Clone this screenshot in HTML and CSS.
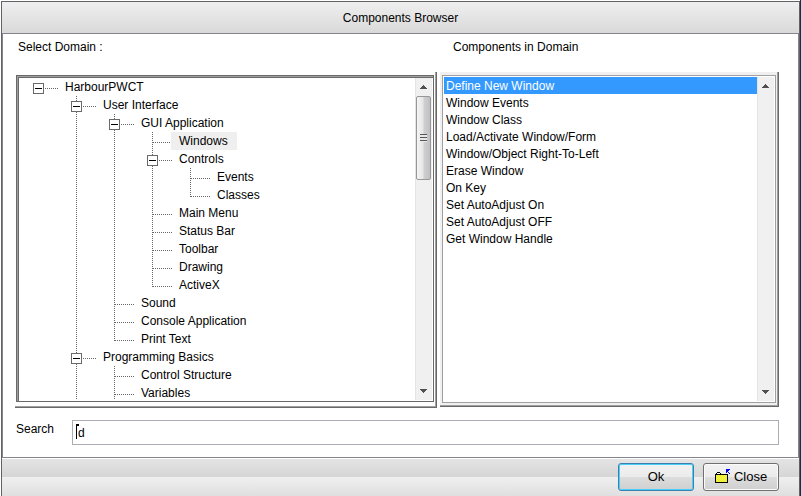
FILE: index.html
```
<!DOCTYPE html>
<html lang="en">
<head>
    <meta charset="UTF-8">
    <title>Components Browser</title>
    <link rel="stylesheet" href="styles.css">
</head>
<body>
<div class="window">
    <h1 class="titlebar">Components Browser</h1>
    <div class="content">
        <div class="columns">
            <div class="domain">
                <h2 id="domainLabel">Select Domain :</h2>
                <div class="frame">
                    <div class="treebox">
                        <ul class="tree" id="tree" aria-labelledby="domainLabel">
                            <li><button class="toggle" aria-label="Toggle HarbourPWCT"></button><span class="label">HarbourPWCT</span>
                                <ul>
                                    <li><button class="toggle" aria-label="Toggle User Interface"></button><span class="label">User Interface</span>
                                        <ul>
                                            <li><button class="toggle" aria-label="Toggle GUI Application"></button><span class="label">GUI Application</span>
                                                <ul>
                                                    <li><span class="label selected">Windows</span></li>
                                                    <li><button class="toggle" aria-label="Toggle Controls"></button><span class="label">Controls</span>
                                                        <ul>
                                                            <li><span class="label">Events</span></li>
                                                            <li><span class="label">Classes</span></li>
                                                        </ul>
                                                    </li>
                                                    <li><span class="label">Main Menu</span></li>
                                                    <li><span class="label">Status Bar</span></li>
                                                    <li><span class="label">Toolbar</span></li>
                                                    <li><span class="label">Drawing</span></li>
                                                    <li><span class="label">ActiveX</span></li>
                                                </ul>
                                            </li>
                                            <li><span class="label">Sound</span></li>
                                            <li><span class="label">Console Application</span></li>
                                            <li><span class="label">Print Text</span></li>
                                        </ul>
                                    </li>
                                    <li class="more"><button class="toggle" aria-label="Toggle Programming Basics"></button><span class="label">Programming Basics</span>
                                        <ul>
                                            <li><span class="label">Control Structure</span></li>
                                            <li class="more"><span class="label">Variables</span></li>
                                        </ul>
                                    </li>
                                </ul>
                            </li>
                        </ul>
                        <div class="scrollbar">
                            <svg class="arrow" viewBox="0 0 7 4"><path d="M3 0h1v1h1v1h1v1h1v1H0V3h1V2h1V1h1z"/></svg>
                            <div class="thumb"></div>
                            <svg class="arrow down" viewBox="0 0 7 4"><path d="M0 0h7v1H6v1H5v1H4v1H3V3H2V2H1V1H0z"/></svg>
                        </div>
                    </div>
                </div>
            </div>
            <div class="components">
                <h2 id="componentsLabel">Components in Domain</h2>
                <div class="frame">
                    <div class="listbox">
                        <ul class="list" id="list" aria-labelledby="componentsLabel">
                            <li class="active">Define New Window</li>
                            <li>Window Events</li>
                            <li>Window Class</li>
                            <li>Load/Activate Window/Form</li>
                            <li>Window/Object Right-To-Left</li>
                            <li>Erase Window</li>
                            <li>On Key</li>
                            <li>Set AutoAdjust On</li>
                            <li>Set AutoAdjust OFF</li>
                            <li>Get Window Handle</li>
                        </ul>
                        <div class="scrollbar">
                            <svg class="arrow" viewBox="0 0 7 4"><path d="M3 0h1v1h1v1h1v1h1v1H0V3h1V2h1V1h1z"/></svg>
                            <svg class="arrow down" viewBox="0 0 7 4"><path d="M0 0h7v1H6v1H5v1H4v1H3V3H2V2H1V1H0z"/></svg>
                        </div>
                    </div>
                </div>
            </div>
        </div>
        <div class="search">
            <label for="search">Search</label>
            <div class="field">
                <input type="text" id="search" value="d">
                <span class="caret"></span>
            </div>
        </div>
    </div>
    <div class="footer">
        <button class="btn default">Ok</button>
        <button class="btn">
            <svg width="16" height="15" viewBox="0 0 16 15" shape-rendering="crispEdges">
                <defs>
                    <pattern id="dither" width="2" height="2" patternUnits="userSpaceOnUse">
                        <path d="M0 0h2v2H0z" fill="#ff0"/>
                        <path d="M0 0h1v1H0zM1 1h1v1H1z" fill="#e2e27a"/>
                    </pattern>
                </defs>
                <path d="M0 5h1V4h1V3h3v1h1v1h7v9H0z" fill="#000"/>
                <path d="M2 4h3v1H2z" fill="#fff"/>
                <path d="M1 6h11v7H1z" fill="url(#dither)"/>
                <path d="M11 0h4v1h-1v1h-1v1h1v1h1v1h-1V4h-1V3h-1v1h-1z" fill="#0000f0"/>
            </svg>
            Close
        </button>
    </div>
</div>
<script>
    var aToggle = document.getElementsByClassName('toggle');
    var aItem = document.getElementById('list').getElementsByTagName('li');

    for(var i = 0; i < aToggle.length; i++) {
        aToggle[i].onclick = function () {
            this.parentNode.classList.toggle('closed');
        }
    }

    for(var i = 0; i < aItem.length; i++) {
        aItem[i].onclick = function () {
            for(var j = 0; j < aItem.length; j++) {
                aItem[j].className = '';
            }
            this.className = 'active';
        }
    }
</script>
</body>
</html>
```
FILE: styles.css
```
*{
    margin: 0;
    padding: 0;
    box-sizing: border-box;
}
body{
    min-height: 100vh;
    padding: 1px 0 0 1px;
    border-right: 1px solid #12304f;
    background: #fff;
    color: #000;
    font: 12px/18px "Liberation Sans", Arial, sans-serif;
    display: flex;
    overflow: hidden;
}
ul{
    list-style: none;
}
.window{
    flex: 1;
    display: flex;
    flex-direction: column;
    border: 1px solid #626266;
    border-bottom: 0;
}
.titlebar{
    height: 31px;
    padding-top: 1px;
    font-size: 12px;
    font-weight: normal;
    line-height: 31px;
    text-align: center;
    background: linear-gradient(#efefef, #d9d9d9);
}
.content{
    flex: 1;
    display: flex;
    flex-direction: column;
    padding: 0 19px 12px 12px;
    border: 1px solid #85858f;
}
.columns{
    flex: 1;
    display: flex;
    gap: 3px;
}
.domain, .components{
    display: flex;
    flex-direction: column;
}
.domain{
    width: 422px;
}
.components{
    flex: 1;
    padding-bottom: 1px;
}
h2{
    height: 38px;
    padding: 4px 3px;
    font-size: 12px;
    font-weight: normal;
}
.components h2{
    padding-left: 13px;
}
.frame{
    flex: 1;
    display: flex;
    border: solid #696969;
    border-width: 0 1px 1px 0;
    box-shadow: inset -1px -1px #a0a0a0;
}
.domain .frame{
    padding: 3px 2px 5px 1px;
}
.components .frame{
    padding: 3px 2px 3px 2px;
    background: #f0f0f0;
}
.treebox, .listbox{
    flex: 1;
    display: flex;
    background: #fff;
}
.treebox{
    height: 327px;
    padding: 2px 1px 1px 2px;
    border: 1px solid #696969;
    box-shadow: inset 1px 1px #a0a0a0, inset 2px 2px #696969;
    overflow: hidden;
}
.listbox{
    padding: 1px;
    border: 1px solid #a0a0a4;
}

/* tree */
.tree{
    flex: 1;
    height: 322px;
    padding-left: 14px;
    overflow: hidden;
}
.tree ul{
    margin-left: 38px;
}
.tree li{
    position: relative;
}
.tree .closed > ul{
    display: none;
}
/* dotted connectors */
.tree li::before{
    content: "";
    position: absolute;
    top: 10px;
    left: 6px;
    width: 19px;
    height: 1px;
    background: repeating-linear-gradient(90deg, #666 0 1px, #fff 1px 2px);
}
.tree ul li::after{
    content: "";
    position: absolute;
    top: 0;
    bottom: 0;
    left: 5px;
    width: 1px;
    background: repeating-linear-gradient(#666 0 1px, #fff 1px 2px);
}
.tree ul li:last-child:not(.more)::after{
    bottom: auto;
    height: 11px;
}
.toggle{
    position: absolute;
    top: 5px;
    left: 0;
    z-index: 1;
    width: 11px;
    height: 11px;
    border: 1px solid #696969;
    background: linear-gradient(#000, #000) center / 7px 1px no-repeat #fff;
}
.label{
    position: relative;
    display: inline-block;
    height: 18px;
    margin-left: 24px;
    padding: 0 9px 0 8px;
    vertical-align: top;
}
.selected{
    background: #efefef;
}

/* list */
.list{
    flex: 1;
    line-height: 15px;
}
.list li{
    padding: 2px 0 0 2px;
}
.list .active{
    background: #3399ff;
    color: #fff;
}

.scrollbar{
    width: 17px;
    display: flex;
    flex-direction: column;
    align-items: center;
    padding: 7px 0;
    background: #f0f0f0;
    box-shadow: inset 1px 0 #e4e4e4;
}
.arrow{
    width: 7px;
    height: 4px;
    fill: #505050;
    shape-rendering: crispEdges;
}
.down{
    margin-top: auto;
}
.thumb{
    width: 15px;
    height: 84px;
    margin-top: 7px;
    border: 1px solid #979797;
    border-radius: 2px;
    background:
        repeating-linear-gradient(#555 0 1px, #e8e8e8 1px 3px) center / 7px 8px no-repeat,
        linear-gradient(90deg, #f5f5f5, #e6e6e8 45%, #cfcfd2 55%, #c0c0c4);
}

/* search */
.search{
    display: flex;
    margin-top: 12px;
}
.search label{
    width: 57px;
    padding-left: 1px;
}
.field{
    position: relative;
    flex: 1;
}
.field input{
    display: block;
    width: 100%;
    height: 25px;
    padding: 0 5px;
    border: 1px solid #abadb3;
    font: inherit;
    outline: 0;
}
.caret{
    position: absolute;
    top: 4px;
    left: 4px;
    width: 1px;
    height: 15px;
    background: #000;
}
.caret::after{
    content: "";
    position: absolute;
    top: 0;
    left: 0;
    width: 3px;
    height: 2px;
    background: #000;
}

.footer{
    display: flex;
    justify-content: flex-end;
    gap: 9px;
    height: 38px;
    padding: 4px 20px 0 0;
    border-top: 1px solid #fff;
    background: linear-gradient(#e4e4e4, #d5d5d5 50%, #efefef 50%, #dfdfdf);
}
.btn{
    display: flex;
    align-items: center;
    justify-content: center;
    gap: 3px;
    width: 76px;
    height: 28px;
    padding-bottom: 1px;
    border: 1px solid #707070;
    border-radius: 3px;
    background: linear-gradient(#f2f2f2, #ebebeb 50%, #dddddd 50%, #cfcfcf);
    box-shadow: inset 0 0 0 1px #fbfbfb;
    font: 13px "Liberation Sans", Arial, sans-serif;
    color: #000;
}
.default{
    border-color: #3c7fb1;
    box-shadow: inset 0 0 0 1px #48d0f8;
}
```
